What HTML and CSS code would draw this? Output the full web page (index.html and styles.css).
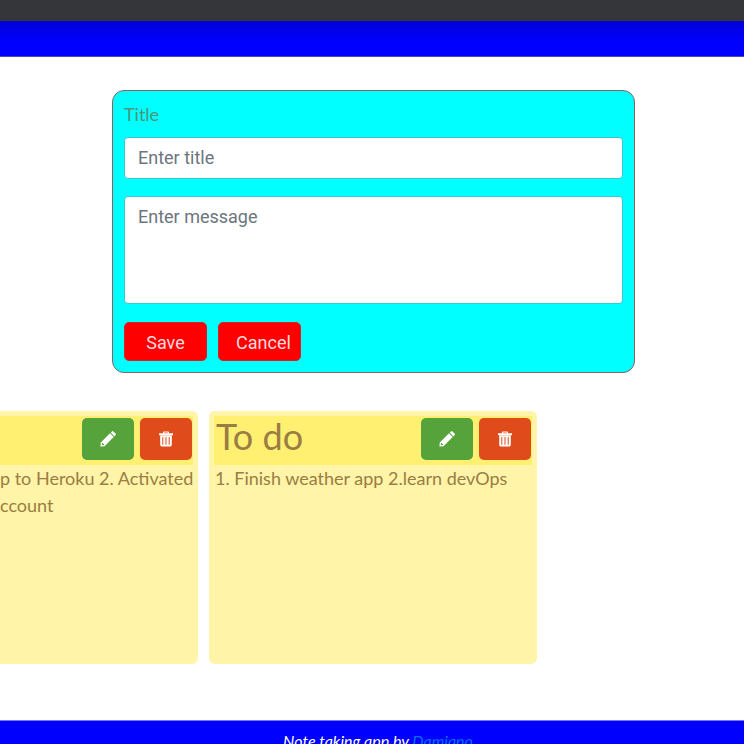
FILE: index.html
```html
<!DOCTYPE html>
<html lang="en">
<head>
<meta charset="utf-8">
<meta name="viewport" content="width=device-width, initial-scale=1">
<title>Notes</title>
<link rel="stylesheet" href="styles.css">
</head>
<body>
<svg class="sprite" aria-hidden="true">
  <symbol id="pencil" viewBox="0 0 16 16">
    <path fill="currentColor" fill-rule="evenodd" d="M10.700 1.600 12 .4q.7-.6 1.400 0l2.200 2.200q.7.7 0 1.400l-1.300 1.400zM10 2.300l3.700 3.700-9.200 9.200L.4 15.600l.4-4.100zM2 12l-.3 1.200 1.100 1.100L4 14v-1H3v-1z"/>
  </symbol>
  <symbol id="trash" viewBox="0 0 16 16">
    <path fill="currentColor" fill-rule="evenodd" d="M5 2.200V1.500Q5 .4 6 .4h4q1 0 1 1.100v.7h4v2.100H1V2.200zm1.200 0h3.600v-.7H6.200zM2.200 4.400h11.600v9.300q0 1.700-1.500 1.700H3.700q-1.500 0-1.500-1.700zM4.300 6v7.800h1V6zm3.200 0v7.800h1V6zm3.200 0v7.800h1V6z"/>
  </symbol>
</svg>
<div class="statusbar"></div>
<header class="topbar"></header>
<main>
  <form class="editor">
    <label for="title">Title</label>
    <input id="title" type="text" placeholder="Enter title">
    <textarea aria-label="Message" placeholder="Enter message"></textarea>
    <div class="buttons">
      <button class="action" type="button">Save</button>
      <button class="action cancel" type="button">Cancel</button>
    </div>
  </form>
  <section class="notes">
    <article class="note cut">
      <div class="note-head">
        <button class="tool edit" type="button" aria-label="Edit"><svg><use href="#pencil"/></svg></button>
        <button class="tool delete" type="button" aria-label="Delete"><svg><use href="#trash"/></svg></button>
      </div>
      <p>p to Heroku 2. Activated<br>ccount</p>
    </article>
    <article class="note">
      <div class="note-head">
        <h2>To do</h2>
        <button class="tool edit" type="button" aria-label="Edit"><svg><use href="#pencil"/></svg></button>
        <button class="tool delete" type="button" aria-label="Delete"><svg><use href="#trash"/></svg></button>
      </div>
      <p>1. Finish weather app 2.learn devOps</p>
    </article>
  </section>
</main>
<footer>Note taking app by <a href="#">Damiano</a></footer>
</body>
</html>
```
FILE: styles.css
```css
* { box-sizing: border-box; }
body {
  margin: 0;
  height: 100vh;
  overflow: hidden;
  background: #fff;
  font: 18px/27px Lato, sans-serif;
  color: #9a7d42;
}
.sprite { display: none; }
.statusbar { height: 21px; background: #35363a; }
.topbar {
  height: 36px;
  background: linear-gradient(#0000d8, #00f 60%);
  border-bottom: 1px solid #4545c8;
}
main { padding: 33px 0 0 3px; }
.editor {
  width: 523px;
  max-width: 100%;
  margin: 0 auto 38px;
  padding: 10px 11px 11px;
  border: 1px solid #8b6262;
  border-radius: 12px;
  background: #0ff;
}
.editor label {
  display: block;
  margin-bottom: 9px;
  color: #4d947c;
}
.editor input, .editor textarea {
  display: block;
  width: 100%;
  border: 1px solid #36c9cf;
  border-radius: 4px;
  background: #fff;
  padding: 6px 13px;
  font: 18px/27px Roboto, sans-serif;
  color: #495057;
}
.editor input { height: 42px; padding: 5px 13px 7px; margin-bottom: 17px; }
.editor textarea { height: 108px; resize: none; }
::placeholder { color: #6c757d; opacity: 1; }
.buttons { display: flex; gap: 11px; margin-top: 18px; }
.action {
  width: 83px;
  height: 39px;
  padding: 2px 0 0;
  border: 1px solid #c8282c;
  border-radius: 5px;
  background: #f00;
  color: #ffd9dc;
  font: 18px/27px Roboto, sans-serif;
}
.cancel { padding-left: 8px; }
.notes { display: flex; gap: 11px; margin: 0 0 56px -3px; }
.note {
  width: 328px;
  height: 253px;
  padding: 5px;
  border-radius: 6px;
  background: #fff4a8;
}
.cut { width: 198px; padding-left: 0; border-radius: 0 6px 6px 0; }
.note-head {
  display: flex;
  justify-content: flex-end;
  gap: 6px;
  height: 49px;
  padding: 2px 1px 0 2px;
  background: #fff072;
}
.note h2 {
  flex: 1;
  margin: 0;
  font: 36px/36px Lato, sans-serif;
}
.note p { margin: 0; padding-left: 1px; white-space: nowrap; }
.cut p { padding-left: 0; }
.tool {
  display: grid;
  place-items: center;
  width: 52px;
  height: 42px;
  padding: 0;
  border: 0;
  border-radius: 5px;
  background: #57a33b;
  color: #fff;
}
.delete { background: #df4b1b; }
.tool svg { width: 16px; height: 16px; }
footer {
  padding: 6px 12px 20px 24px;
  border-top: 1px solid #7777f0;
  background: #00f;
  color: #fff;
  text-align: center;
  font: italic 16px/27px Lato, sans-serif;
}
footer a { color: #0070f0; text-decoration: none; }
```
